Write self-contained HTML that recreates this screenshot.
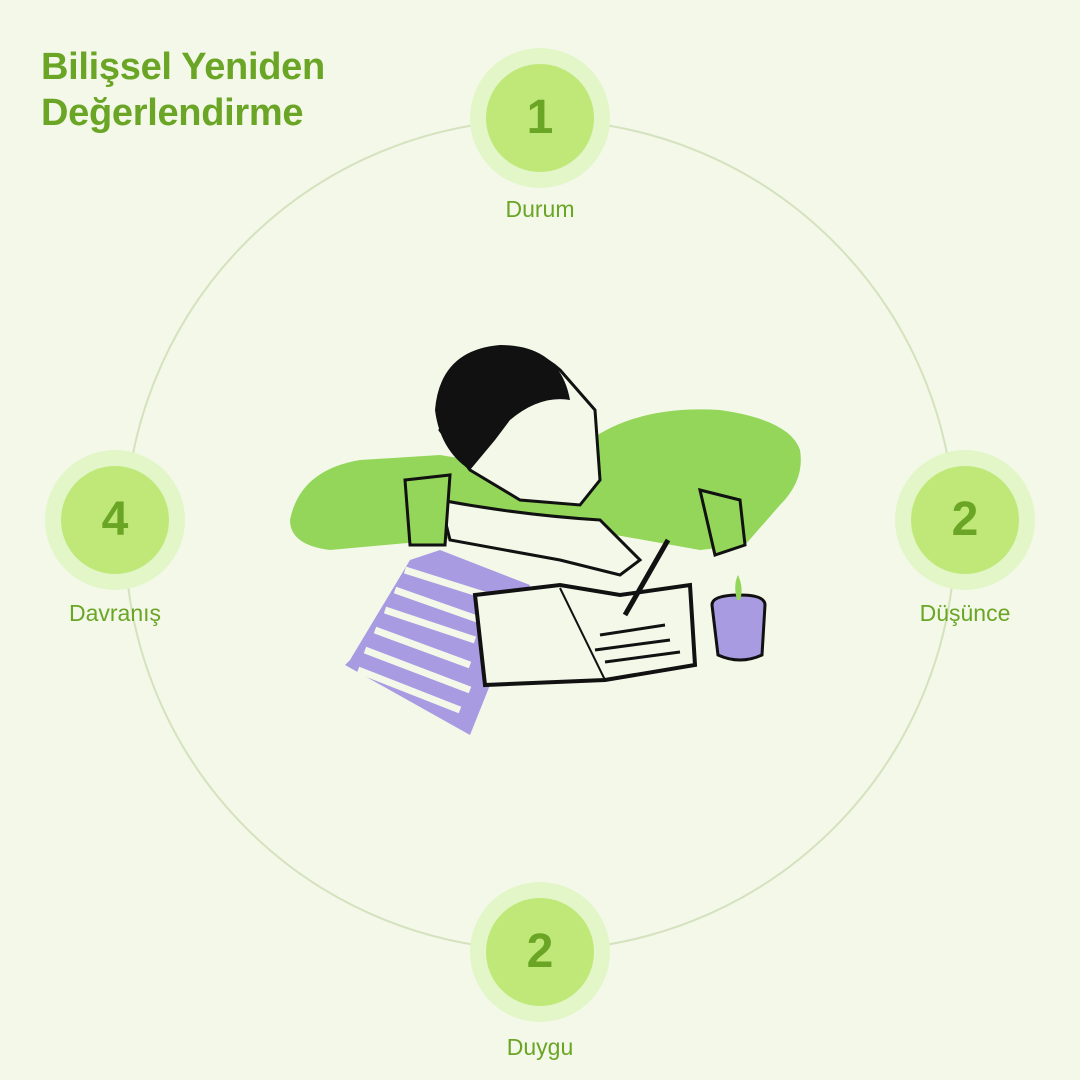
<!DOCTYPE html>
<html><head><meta charset="utf-8"><style>
body{margin:0;width:1080px;height:1080px;background:#f3f8e9;font-family:"Liberation Sans",sans-serif;position:relative;overflow:hidden}
.t{position:absolute;left:41px;top:44px;color:#6aa525;font-size:38px;line-height:46px;font-weight:bold;letter-spacing:-0.3px}
.n{position:absolute;width:140px;height:140px;border-radius:50%;background:#e2f6c8}
.n div{position:absolute;left:16px;top:16px;width:108px;height:108px;border-radius:50%;background:#bfe878;color:#6aa525;font-size:48px;font-weight:bold;text-align:center;line-height:108px}
.l{position:absolute;color:#6aa525;font-size:23px;text-align:center;width:200px}
</style></head><body>
<svg width="1080" height="1080" style="position:absolute;left:0;top:0">
<circle cx="540" cy="535" r="415" fill="none" stroke="#d4e2be" stroke-width="2"/>
<path d="M290 520 Q300 470 360 460 L440 455 Q520 470 590 440 Q640 405 720 410 Q790 420 800 450 Q805 480 780 505 L745 545 L700 550 L560 525 L440 540 L330 550 Q290 545 290 520Z" fill="#93d65a"/>
<path d="M350 660 L410 560 L440 550 L530 585 L470 735 L345 665Z" fill="#a99be2"/>
<g stroke="#f3f8e9" stroke-width="7"><line x1="365" y1="650" x2="470" y2="690"/><line x1="375" y1="630" x2="470" y2="665"/><line x1="385" y1="610" x2="475" y2="640"/><line x1="395" y1="590" x2="480" y2="620"/><line x1="405" y1="570" x2="500" y2="600"/><line x1="358" y1="670" x2="460" y2="710"/></g>
<path d="M475 595 L560 585 L620 595 L690 585 L695 665 L605 680 L485 685Z" fill="#f3f8e9" stroke="#111" stroke-width="4"/>
<line x1="560" y1="588" x2="605" y2="680" stroke="#111" stroke-width="2"/>
<g stroke="#111" stroke-width="3"><line x1="600" y1="635" x2="665" y2="625"/><line x1="595" y1="650" x2="670" y2="640"/><line x1="605" y1="662" x2="680" y2="652"/></g>
<path d="M440 500 Q520 515 600 520 L640 560 L620 575 L560 560 L450 540Z" fill="#f3f8e9" stroke="#111" stroke-width="3"/>
<path d="M470 360 Q520 335 560 370 L595 410 L600 480 L580 505 L520 500 L470 470 L440 430Z" fill="#f3f8e9" stroke="#111" stroke-width="3"/>
<path d="M435 410 Q440 350 500 345 Q560 345 570 400 Q540 395 510 420 L495 440 L470 470 Q440 450 435 410Z" fill="#111"/>
<path d="M405 480 L450 475 L445 545 L410 545Z" fill="#93d65a" stroke="#111" stroke-width="3"/>
<path d="M700 490 L740 500 L745 545 L715 555Z" fill="#93d65a" stroke="#111" stroke-width="3"/>
<line x1="625" y1="615" x2="668" y2="540" stroke="#111" stroke-width="5"/>
<path d="M712 605 Q712 595 740 595 Q765 595 765 605 L762 655 Q740 665 718 655Z" fill="#a99be2" stroke="#111" stroke-width="3"/>
<path d="M737 600 Q733 585 738 575 Q744 588 740 600Z" fill="#93d65a"/>
</svg>
<div class="t">Bilişsel Yeniden<br>Değerlendirme</div>
<div class="n" style="left:470px;top:48px"><div>1</div></div>
<div class="l" style="left:440px;top:196px">Durum</div>
<div class="n" style="left:895px;top:450px"><div>2</div></div>
<div class="l" style="left:865px;top:600px">Düşünce</div>
<div class="n" style="left:470px;top:882px"><div>2</div></div>
<div class="l" style="left:440px;top:1034px">Duygu</div>
<div class="n" style="left:45px;top:450px"><div>4</div></div>
<div class="l" style="left:15px;top:600px">Davranış</div>
</body></html>
